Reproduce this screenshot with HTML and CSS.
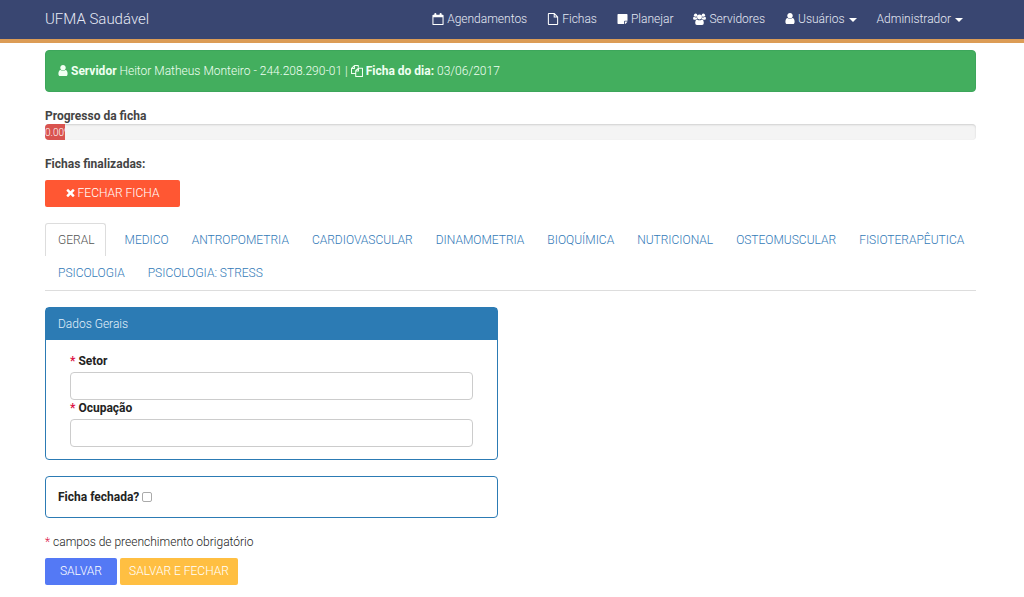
FILE: index.html
```html
<!DOCTYPE html>
<html lang="pt-BR">
<head>
<meta charset="utf-8">
<meta name="viewport" content="width=device-width, initial-scale=1">
<title>UFMA Saudável</title>
<link rel="stylesheet" href="styles.css">
</head>
<body>
<svg class="sprite" aria-hidden="true">
  <symbol id="user" viewBox="256 128 1280 1536"><path d="M1536 1399q0 109-62.5 187t-150.5 78h-854q-88 0-150.5-78t-62.5-187q0-85 8.5-160.5t31.5-152 58.5-131 94-89 134.5-34.5q131 128 313 128t313-128q76 0 134.5 34.5t94 89 58.5 131 31.5 152 8.5 160.5zm-256-887q0 159-112.5 271.5t-271.5 112.5-271.5-112.5-112.5-271.5 112.5-271.5 271.5-112.5 271.5 112.5 112.5 271.5z"/></symbol>
  <symbol id="calendar" viewBox="0 0 13 14"><path fill-rule="evenodd" d="M1 2h1.200V1.200a1.200 1.200 0 0 1 2.400 0V2h3.800V1.200a1.200 1.200 0 0 1 2.400 0V2H12a1 1 0 0 1 1 1v10a1 1 0 0 1-1 1H1a1 1 0 0 1-1-1V3a1 1 0 0 1 1-1zM1.200 5v7.800h10.600V5z"/></symbol>
  <symbol id="file" viewBox="0 0 12 14"><path d="M.6 1.200q0-.6.6-.6H7.500L11.400 4.500v8.300q0 .6-.6.6H1.200q-.6 0-.6-.6zM7.400.8v3.800h3.800" fill="none" stroke="currentColor" stroke-width="1.200"/></symbol>
  <symbol id="note" viewBox="0 0 12 12"><path d="M.8 0h10.400q.8 0 .8.8V8H8.800q-.8 0-.8.8V12H.8q-.8 0-.8-.8V.8Q0 0 .8 0zM9 9h2.900q-.1.600-.5 1L10 11.400q-.4.400-1 .5z"/></symbol>
  <symbol id="users" viewBox="0 0 15 14"><circle cx="3" cy="2.500" r="2"/><circle cx="12" cy="2.500" r="2"/><path d="M1 4.500q2 1.300 3.500.4Q4.300 6 5 7 3.700 7 3 8H1.500Q0 8 0 6.800 0 4.600 1 4.500zM14 4.500q-2 1.300-3.500.4.200 1.100-.5 2.100 1.300 0 2 1h1.500Q15 8 15 6.800q0-2.200-1-2.300z"/><circle cx="7.500" cy="4.700" r="2.900"/><path d="M4.700 7.500q2.800 2 5.600 0 2.200.3 2.200 4.300 0 2.200-2 2.200h-6q-2 0-2-2.200 0-4 2.200-4.300z"/></symbol>
  <symbol id="copy" viewBox="0 0 14 14"><path d="M5 10H.6V4L4 .6h4.500V3M4 .7V4H.7M5.500 6.500v6.900h7.900V3.700H8.700zM8.700 3.700V7H5.700" fill="none" stroke="currentColor" stroke-width="1.200" stroke-linejoin="round"/></symbol>
  <symbol id="times" viewBox="302 366 1188 1188"><path d="M1490 1322q0 40-28 68l-136 136q-28 28-68 28t-68-28l-294-294-294 294q-28 28-68 28t-68-28l-136-136q-28-28-28-68t28-68l294-294-294-294q-28-28-28-68t28-68l136-136q28-28 68-28t68 28l294 294 294-294q28-28 68-28t68 28l136 136q28 28 28 68t-28 68l-294 294 294 294q28 28 28 68z"/></symbol>
</svg>
<header class="navbar">
  <a class="brand" href="#">UFMA Saudável</a>
  <nav class="menu">
    <a href="#"><svg class="icon"><use href="#calendar"/></svg>Agendamentos</a>
    <a href="#"><svg class="icon"><use href="#file"/></svg>Fichas</a>
    <a href="#"><svg class="icon small"><use href="#note"/></svg>Planejar</a>
    <a href="#"><svg class="icon wide"><use href="#users"/></svg>Servidores</a>
    <a href="#"><svg class="icon slim"><use href="#user"/></svg>Usuários<span class="caret"></span></a>
    <a href="#">Administrador<span class="caret"></span></a>
  </nav>
</header>
<main class="container">
  <div class="alert"><svg class="icon slim"><use href="#user"/></svg><b>Servidor</b> Heitor Matheus Monteiro - 244.208.290-01 | <svg class="icon"><use href="#copy"/></svg><b>Ficha do dia:</b> 03/06/2017</div>
  <section>
    <b class="label" id="progress-label">Progresso da ficha</b>
    <div class="progress"><div class="progress-bar" role="progressbar" aria-labelledby="progress-label" aria-valuenow="0" aria-valuemin="0" aria-valuemax="100">0.00%</div></div>
  </section>
  <section class="finished">
    <b class="label">Fichas finalizadas:</b>
    <button type="button" class="btn close"><svg class="icon cross"><use href="#times"/></svg>FECHAR FICHA</button>
  </section>
  <nav class="tabs">
    <a class="active" href="#">GERAL</a>
    <a href="#">MEDICO</a>
    <a href="#">ANTROPOMETRIA</a>
    <a href="#">CARDIOVASCULAR</a>
    <a href="#">DINAMOMETRIA</a>
    <a href="#">BIOQUÍMICA</a>
    <a href="#">NUTRICIONAL</a>
    <a href="#">OSTEOMUSCULAR</a>
    <a href="#">FISIOTERAPÊUTICA</a>
    <a href="#">PSICOLOGIA</a>
    <a href="#">PSICOLOGIA: STRESS</a>
  </nav>
  <form class="form">
    <section class="panel">
      <h2>Dados Gerais</h2>
      <div class="fields">
        <label for="setor"><span class="req">*</span> Setor</label>
        <input class="text" id="setor" type="text">
        <label for="ocupacao"><span class="req">*</span> Ocupação</label>
        <input class="text" id="ocupacao" type="text">
      </div>
    </section>
    <section class="panel closed">
      <label for="fechada">Ficha fechada?</label>
      <input class="check" id="fechada" type="checkbox">
    </section>
    <p class="hint"><span class="req">*</span> campos de preenchimento obrigatório</p>
    <div class="actions">
      <button type="button" class="btn save">SALVAR</button>
      <button type="button" class="btn save-close">SALVAR E FECHAR</button>
    </div>
  </form>
</main>
</body>
</html>
```
FILE: styles.css
```css
* { box-sizing: border-box; }
body {
  margin: 0;
  background: #fff;
  color: #222;
  font: 300 12px/17px Roboto, sans-serif;
}
a { text-decoration: none; }
b, label { font-weight: 700; }
.sprite { display: none; }
.icon {
  width: 12px;
  height: 12px;
  margin-right: 3px;
  fill: currentColor;
  vertical-align: -2px;
}
.icon.slim { width: 10px; height: 11px; vertical-align: -1px; }
.icon.small { width: 11px; height: 10px; vertical-align: -1px; }
.icon.wide { width: 13px; }
.icon.cross { width: 9px; height: 8px; vertical-align: 0; }

.navbar {
  display: flex;
  justify-content: space-between;
  align-items: center;
  height: 43px;
  padding: 0 51px 0 45px;
  background: #394671;
  border-bottom: 4px solid #dc9c56;
}
.brand { color: #e6eaf5; font-size: 15px; }
.menu { display: flex; }
.menu a { padding: 0 10px; color: #e6eaf5; }
.menu .icon { color: #fff; }
.caret {
  display: inline-block;
  margin-left: 4px;
  border: 4px solid transparent;
  border-top-color: #fff;
  border-bottom: 0;
  vertical-align: middle;
}

.container { padding: 7px 48px 12px 45px; }
.alert {
  margin-bottom: 16px;
  padding: 12px 12px 11px;
  border: 1px solid #3da65b;
  border-radius: 4px;
  background: #43ae5e;
  color: #f0fff2;
}
.label { display: block; line-height: 16px; color: #444; }
.progress {
  height: 16px;
  margin-bottom: 16px;
  overflow: hidden;
  border-radius: 4px;
  background: #f4f4f4;
  box-shadow: inset 0 1px 2px rgba(0, 0, 0, .15);
}
.progress-bar {
  width: 20px;
  height: 16px;
  overflow: hidden;
  background: #d9534f;
  color: #fff;
  font-size: 10px;
}
.btn {
  height: 27px;
  padding: 0 9px;
  border: 0;
  border-radius: 2px;
  color: #fff;
  font: inherit;
}
.close { min-width: 135px; margin: 8px 0 16px; background: #ff5733; }

.tabs {
  display: flex;
  flex-wrap: wrap;
  column-gap: 6px;
  margin-bottom: 16px;
  padding-bottom: 1px;
  border-bottom: 1px solid #ddd;
}
.tabs a {
  padding: 8px 3px 7px 12px;
  border: 1px solid transparent;
  border-bottom-width: 0;
  border-radius: 3px 3px 0 0;
  color: #337ab7;
}
.tabs .active { padding-right: 10px; border-color: #ddd; color: #555; }

.panel {
  width: 453px;
  max-width: 100%;
  margin: 0 0 16px;
  border: 1px solid #2c7bb4;
  border-radius: 4px;
}
.panel h2 {
  margin: 0;
  padding: 8px 12px 7px;
  background: #2c7bb4;
  color: #e3f1fb;
  font: inherit;
}
.fields { padding: 13px 24px 12px; }
.panel label { display: block; line-height: 16px; }
.req { color: #dc1446; }
.text {
  display: block;
  width: 100%;
  height: 28px;
  margin: 3px 0 0;
  padding: 4px 8px;
  border: 1px solid #ccc;
  border-radius: 4px;
  font: inherit;
}
.closed {
  display: flex;
  align-items: center;
  gap: 3px;
  padding: 12px;
}
.check {
  appearance: none;
  width: 10px;
  height: 10px;
  margin: 0;
  border: 1px solid #aaa;
  border-radius: 2px;
  background: #fff;
}
.check:checked { background: #2c7bb4; }
.hint { margin: 0 0 7px; }
.actions { display: flex; gap: 3px; }
.save { min-width: 72px; background: #5479f5; }
.save-close { min-width: 118px; background: #ffbf42; }
```
